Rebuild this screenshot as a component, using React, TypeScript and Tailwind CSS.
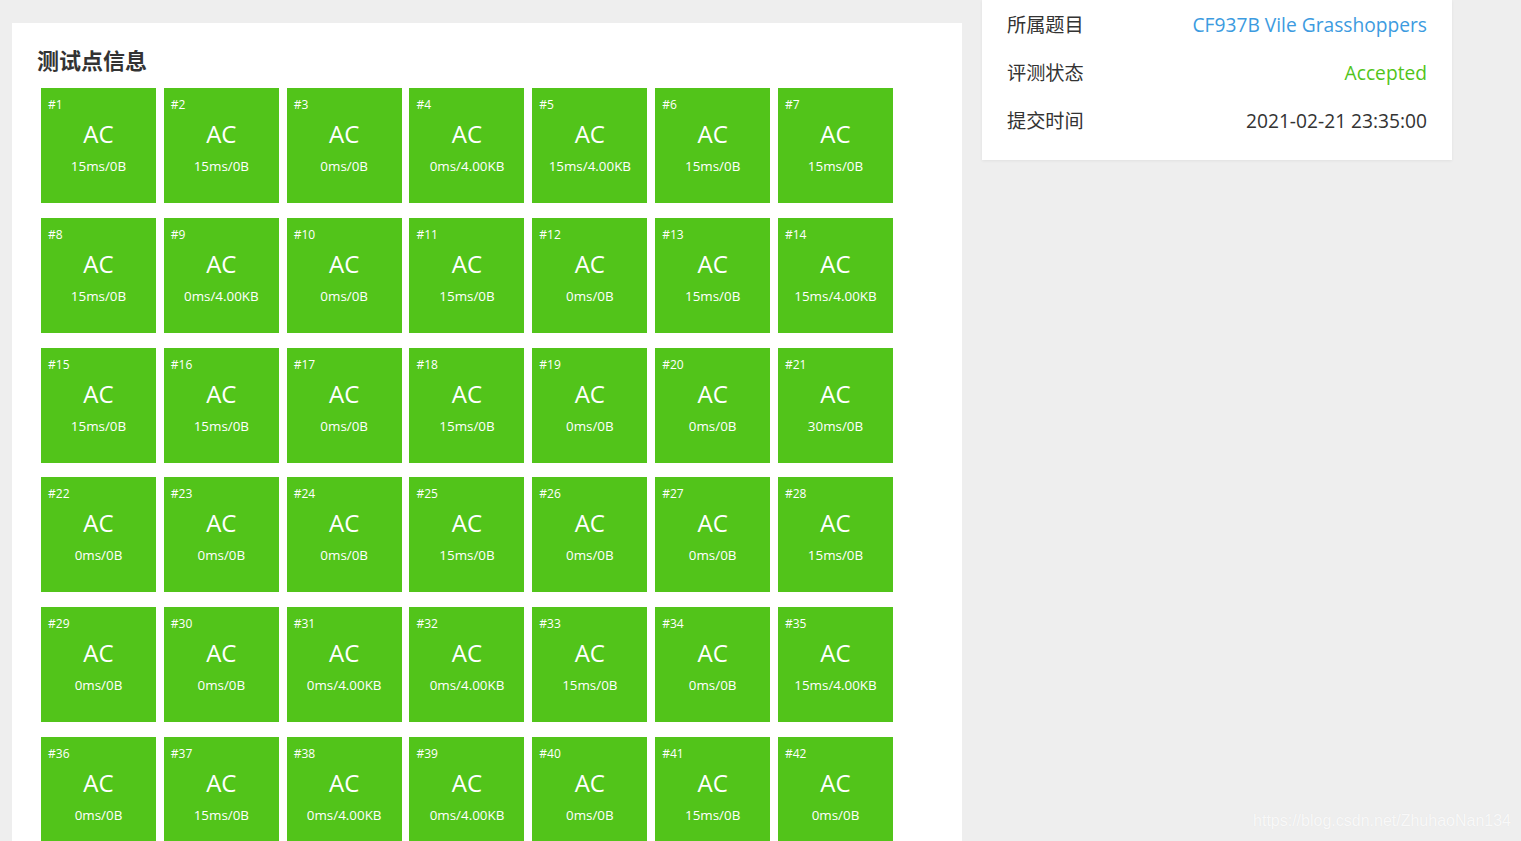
const results = [
  "15ms/0B", "15ms/0B", "0ms/0B", "0ms/4.00KB", "15ms/4.00KB", "15ms/0B", "15ms/0B",
  "15ms/0B", "0ms/4.00KB", "0ms/0B", "15ms/0B", "0ms/0B", "15ms/0B", "15ms/4.00KB",
  "15ms/0B", "15ms/0B", "0ms/0B", "15ms/0B", "0ms/0B", "0ms/0B", "30ms/0B",
  "0ms/0B", "0ms/0B", "0ms/0B", "15ms/0B", "0ms/0B", "0ms/0B", "15ms/0B",
  "0ms/0B", "0ms/0B", "0ms/4.00KB", "0ms/4.00KB", "15ms/0B", "0ms/0B", "15ms/4.00KB",
  "0ms/0B", "15ms/0B", "0ms/4.00KB", "0ms/4.00KB", "0ms/0B", "15ms/0B", "0ms/0B",
]

const font = "font-['Open_Sans','Noto_Sans_CJK_SC',sans-serif]"

function Tile({ index, usage }: { index: number; usage: string }) {
  return (
    <div className="w-[115px] h-[115px] bg-[#52c41a] text-white flex flex-col pt-[9px]">
      <div className="px-[7px] text-[12px] leading-[16px]">#{index}</div>
      <div className="mt-[5px] text-center text-[24px] leading-[32px]">AC</div>
      <div className="mt-[7px] text-center text-[13.4px] leading-[18px]">{usage}</div>
    </div>
  )
}

function InfoRow({ label, children }: { label: string; children: React.ReactNode }) {
  return (
    <div className="h-12 flex items-center justify-between">
      <span className="text-[#333]">{label}</span>
      {children}
    </div>
  )
}

export default function App() {
  return (
    <div className={`relative w-[1521px] h-[841px] overflow-hidden bg-[#eeeeee] ${font}`}>
      <div className="flex items-start">
        {/* Test cases */}
        <div className="ml-[12px] mt-[23px] w-[950px] bg-white pl-[25px] pt-[21px] pb-10">
          <h2 className="text-[22px] leading-[30px] font-bold text-[#333] font-['Noto_Sans_CJK_SC',sans-serif]">
            测试点信息
          </h2>
          <div className="mt-[14px] ml-[4px] grid grid-cols-[repeat(7,115px)] gap-x-[7.83px] gap-y-[14.8px]">
            {results.map((r, i) => (
              <Tile key={i} index={i + 1} usage={r} />
            ))}
          </div>
        </div>

        {/* Submission info */}
        <div className="ml-[20px] w-[470px] bg-white px-[25px] pt-[1px] pb-[15px] text-[19.2px] shadow-[0_1px_3px_rgba(0,0,0,0.06)]">
          <InfoRow label="所属题目">
            <span className="text-[#3c9be0]">CF937B Vile Grasshoppers</span>
          </InfoRow>
          <InfoRow label="评测状态">
            <span className="text-[#52c41a]">Accepted</span>
          </InfoRow>
          <InfoRow label="提交时间">
            <span className="text-[#333]">2021-02-21 23:35:00</span>
          </InfoRow>
        </div>
      </div>

      {/* watermark */}
      <div className="absolute right-[10px] bottom-[8px] text-[16px] text-white/80 font-['Liberation_Sans',sans-serif] [text-shadow:0_0_1px_rgba(0,0,0,0.08)]">
        https://blog.csdn.net/ZhuhaoNan134
      </div>
    </div>
  )
}
